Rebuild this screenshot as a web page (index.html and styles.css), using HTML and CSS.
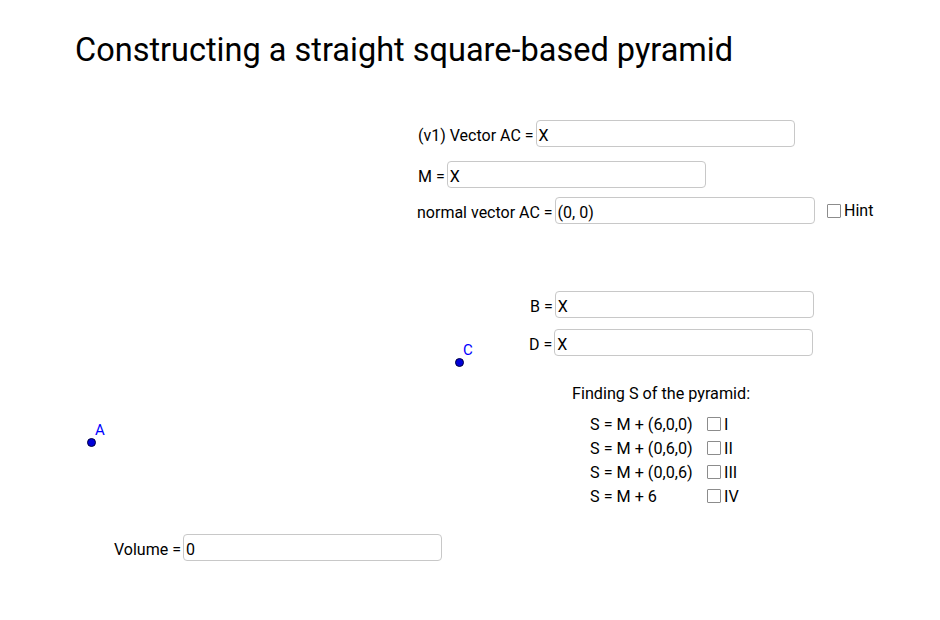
FILE: index.html
```html
<!DOCTYPE html>
<html>
<head>
<meta charset="utf-8">
<link rel="stylesheet" href="styles.css">
</head>
<body>
<div class="canvas">
  <h1 class="title">Constructing a straight square-based pyramid</h1>

  <div class="field f-ac"><span class="lbl">(v1) Vector AC =</span><span class="box">X</span></div>
  <div class="field f-m"><span class="lbl">M =</span><span class="box">X</span></div>
  <div class="field f-n"><span class="lbl">normal vector AC =</span><span class="box">(0, 0)</span></div>
  <div class="check f-hint"><span class="cb"></span><span>Hint</span></div>

  <div class="field f-b"><span class="lbl">B =</span><span class="box">X</span></div>
  <div class="field f-d"><span class="lbl">D =</span><span class="box">X</span></div>

  <div class="finding">
    <div class="ftitle">Finding S of the pyramid:</div>
    <div class="rows">
      <div class="row"><span class="expr">S = M + (6,0,0)</span><span class="check"><span class="cb"></span><span>I</span></span></div>
      <div class="row"><span class="expr">S = M + (0,6,0)</span><span class="check"><span class="cb"></span><span>II</span></span></div>
      <div class="row"><span class="expr">S = M + (0,0,6)</span><span class="check"><span class="cb"></span><span>III</span></span></div>
      <div class="row"><span class="expr">S = M + 6</span><span class="check"><span class="cb"></span><span>IV</span></span></div>
    </div>
  </div>

  <div class="pt pt-c"><span class="dot"></span><span class="plbl">C</span></div>
  <div class="pt pt-a"><span class="dot"></span><span class="plbl">A</span></div>

  <div class="field f-vol"><span class="lbl">Volume =</span><span class="box">0</span></div>
</div>
</body>
</html>
```
FILE: styles.css
```css
html, body {
  margin: 0;
  padding: 0;
  background: #ffffff;
}
.canvas {
  position: relative;
  width: 940px;
  height: 620px;
  overflow: hidden;
  font-family: Roboto, "Liberation Sans", sans-serif;
  color: #000;
  font-size: 16px;
}
.title {
  position: absolute;
  left: 75px;
  top: 30px;
  margin: 0;
  font-size: 32.5px;
  font-weight: 400;
  line-height: 40px;
  white-space: nowrap;
}
.field {
  position: absolute;
  display: flex;
  align-items: center;
  height: 27px;
}
.lbl {
  white-space: nowrap;
  padding-right: 2px;
  padding-top: 3px;
}
.box {
  box-sizing: border-box;
  height: 27px;
  width: 259px;
  border: 1px solid #c8c8c8;
  border-radius: 4px;
  padding-left: 2px;
  padding-top: 3px;
  display: flex;
  align-items: center;
  background: #fff;
}
.f-ac { left: 418px; top: 120px; }
.f-m { left: 418px; top: 161px; }
.f-n { left: 417px; top: 197px; }
.f-n .box { width: 260px; }
.f-b { left: 530px; top: 291px; }
.f-d { left: 529px; top: 329px; }
.f-vol { left: 114px; top: 534px; }

.check {
  display: flex;
  align-items: center;
  gap: 3px;
}
.cb {
  box-sizing: border-box;
  width: 14px;
  height: 14px;
  border: 1.5px solid #8c8c8c;
  border-radius: 1px;
  background: #fff;
}
.f-hint {
  position: absolute;
  left: 827px;
  top: 200px;
  height: 21px;
}
.finding {
  position: absolute;
  left: 572px;
  top: 383px;
  font-size: 16.2px;
}
.ftitle {
  line-height: 22px;
  white-space: nowrap;
}
.rows {
  margin-top: 7px;
  margin-left: 18px;
  display: flex;
  flex-direction: column;
}
.row {
  display: flex;
  align-items: center;
  height: 24px;
  white-space: nowrap;
}
.expr {
  width: 117px;
}
.pt {
  position: absolute;
}
.dot {
  position: absolute;
  left: -4.5px;
  top: -3.5px;
  width: 9px;
  height: 9px;
  box-sizing: border-box;
  border-radius: 50%;
  background: #0000d8;
  border: 1.5px solid #000040;
}
.plbl {
  position: absolute;
  left: 4px;
  top: -19px;
  color: #0000ff;
  font-size: 15px;
  line-height: 16px;
}
.pt-c { left: 459px; top: 361px; }
.pt-a { left: 91px; top: 441px; }
```
